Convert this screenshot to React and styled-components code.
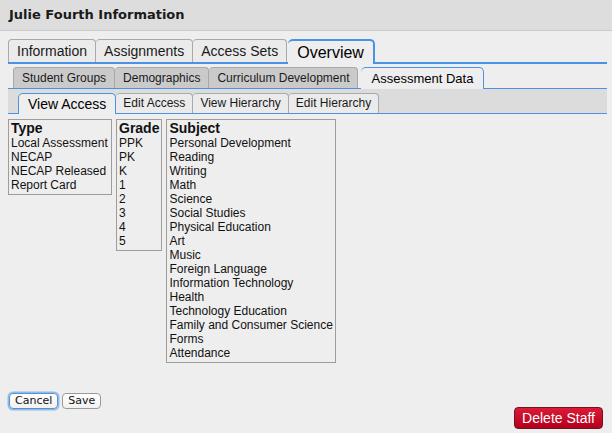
import React from "react"
import styled, { createGlobalStyle, css } from "styled-components"

const BLUE = "#4a92e3"

const GlobalStyle = createGlobalStyle`
  html, body {
    margin: 0;
    padding: 0;
    background: #eeeeee;
    font-family: "Liberation Sans", Arial, sans-serif;
    color: #111;
  }
`

const Page = styled.div`
  width: 612px;
  height: 433px;
  overflow: hidden;
  background: #eeeeee;
`

const TitleBar = styled.div`
  height: 30px;
  line-height: 30px;
  padding-left: 9px;
  background: #dddddd;
  border-bottom: 1px solid #cbcbcb;
  font-family: "DejaVu Sans", sans-serif;
  font-weight: bold;
  font-size: 13px;
  color: #1a1a1a;
`

const Body = styled.div`
  padding: 8px 5px 0 8px;
`

const levels = {
  1: { height: 23, font: 14, activeFont: 16, pad: 8, activePad: 9, line: 2, bg: "#ebebeb", gap: 1 },
  2: { height: 21, font: 12, activeFont: 13, pad: 8, activePad: 10, line: 1, bg: "#cacaca", gap: 3 },
  3: { height: 20, font: 12, activeFont: 14, pad: 7, activePad: 9, line: 1, bg: "#ebebeb", gap: 0 },
}

const TabBar = styled.div`
  display: flex;
  align-items: flex-end;
  border-bottom: ${p => levels[p.$level].line}px solid ${BLUE};
  ${p => p.$level === 2 && css`
    margin-top: 3px;
    padding-left: 5px;
  `}
  ${p => p.$level === 3 && css`
    background: #dcdcdc;
    padding: 4px 0 0 10px;
  `}
`

const Tab = styled.div`
  box-sizing: border-box;
  height: ${p => levels[p.$level].height}px;
  line-height: ${p => levels[p.$level].height - 1}px;
  padding: 0 ${p => levels[p.$level].pad}px;
  font-size: ${p => levels[p.$level].font}px;
  background: ${p => levels[p.$level].bg};
  border: 1px solid #a9a9a9;
  border-bottom: none;
  border-radius: 4px 4px 0 0;
  white-space: nowrap;
  color: #1a1a1a;
  & + & {
    border-left: none;
  }
  ${p => p.$active && css`
    && {
      position: relative;
      height: ${levels[p.$level].height + levels[p.$level].line}px;
      line-height: ${levels[p.$level].height}px;
      margin-bottom: -${levels[p.$level].line}px;
      margin-left: ${levels[p.$level].gap}px;
      padding: 0 ${levels[p.$level].activePad}px;
      font-size: ${levels[p.$level].activeFont}px;
      background: #eeeeee;
      border: ${levels[p.$level].line}px solid ${BLUE};
      border-bottom: none;
      border-radius: 5px 5px 0 0;
      color: #000;
    }
  `}
`

const Columns = styled.div`
  display: flex;
  align-items: flex-start;
  gap: 4px;
  margin-top: 5px;
`

const ListBox = styled.div`
  box-sizing: border-box;
  border: 1px solid #9d9d9d;
  padding: 0 2px 2px;
  font-size: 12px;
  line-height: 14px;
  white-space: nowrap;
  min-width: ${p => p.$min || 0}px;
`

const ListHead = styled.div`
  font-weight: bold;
  font-size: 14px;
  line-height: 15px;
  padding-top: 1px;
`

const Footer = styled.div`
  display: flex;
  justify-content: space-between;
  align-items: flex-start;
  margin-top: 30px;
  padding-right: 4px;
`

const ButtonGroup = styled.div`
  display: flex;
  gap: 4px;
  padding-left: 1px;
`

const SmallButton = styled.button`
  box-sizing: border-box;
  height: 16px;
  padding: 0 5px;
  font-family: "DejaVu Sans", sans-serif;
  font-size: 11px;
  line-height: 14px;
  color: #111;
  background: linear-gradient(#ffffff, #f1f1f1);
  border: 1px solid #9a9a9a;
  border-radius: 4px;
  ${p => p.$focused && css`
    border-color: #5c8fcb;
    box-shadow: 0 0 0 1.5px #8dbbec;
  `}
`

const DangerButton = styled.button`
  box-sizing: border-box;
  height: 22px;
  margin-top: 14px;
  padding: 0 7px;
  font-family: "Liberation Sans", Arial, sans-serif;
  font-size: 14px;
  color: #ffffff;
  background: linear-gradient(#dc1a35, #b3001d);
  border: 1px solid #6e1322;
  border-radius: 4px;
`

const typeItems = ["Local Assessment", "NECAP", "NECAP Released", "Report Card"]
const gradeItems = ["PPK", "PK", "K", "1", "2", "3", "4", "5"]
const subjectItems = [
  "Personal Development", "Reading", "Writing", "Math", "Science", "Social Studies",
  "Physical Education", "Art", "Music", "Foreign Language", "Information Technology",
  "Health", "Technology Education", "Family and Consumer Science", "Forms", "Attendance",
]

function Tabs({ level, items, active }) {
  return <TabBar $level={level}>
    {items.map(name =>
      <Tab key={name} $level={level} $active={name === active}>{name}</Tab>
    )}
  </TabBar>
}

function List({ title, items, min }) {
  return <ListBox $min={min}>
    <ListHead>{title}</ListHead>
    {items.map(i => <div key={i}>{i}</div>)}
  </ListBox>
}

export default function App() {
  return <Page>
    <GlobalStyle />
    <TitleBar>Julie Fourth Information</TitleBar>
    <Body>
      <Tabs level={1} active="Overview"
        items={["Information", "Assignments", "Access Sets", "Overview"]} />
      <Tabs level={2} active="Assessment Data"
        items={["Student Groups", "Demographics", "Curriculum Development", "Assessment Data"]} />
      <Tabs level={3} active="View Access"
        items={["View Access", "Edit Access", "View Hierarchy", "Edit Hierarchy"]} />
      <Columns>
        <List title="Type" items={typeItems} min={104} />
        <List title="Grade" items={gradeItems} min={46} />
        <List title="Subject" items={subjectItems} min={170} />
      </Columns>
      <Footer>
        <ButtonGroup>
          <SmallButton $focused>Cancel</SmallButton>
          <SmallButton>Save</SmallButton>
        </ButtonGroup>
        <DangerButton>Delete Staff</DangerButton>
      </Footer>
    </Body>
  </Page>
}
